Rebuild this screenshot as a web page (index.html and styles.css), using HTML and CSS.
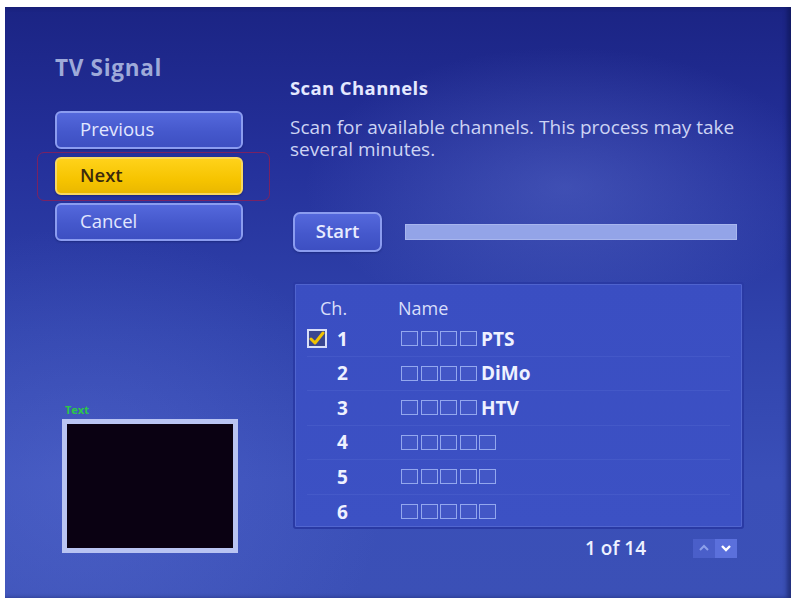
FILE: index.html
```html
<!DOCTYPE html>
<html>
<head>
<meta charset="utf-8">
<link rel="stylesheet" href="styles.css">
</head>
<body>
<div class="screen">
  <div class="left">
    <div class="page-title">TV Signal</div>
    <div class="btns">
      <div class="btn">Previous</div>
      <div class="btn btn-focus">Next<span class="focus-ring"></span></div>
      <div class="btn">Cancel</div>
    </div>
    <div class="preview">
      <div class="preview-label">Text</div>
      <div class="preview-box"></div>
    </div>
  </div>
  <div class="right">
    <div class="section-title">Scan Channels</div>
    <div class="desc">Scan for available channels. This process may take several minutes.</div>
    <div class="start-row">
      <div class="btn start-btn">Start</div>
      <div class="progress"></div>
    </div>
    <div class="panel">
      <div class="head">
        <span class="h-ch">Ch.</span>
        <span class="h-name">Name</span>
      </div>
      <div class="row">
        <span class="chk"><svg width="16" height="15" viewBox="0 0 16 15"><path d="M2 8 L6 12 L14 2" fill="none" stroke="#f2c200" stroke-width="3" stroke-linecap="round" stroke-linejoin="round"/></svg></span>
        <span class="num">1</span>
        <span class="name"><i class="sq"></i><i class="sq"></i><i class="sq"></i><i class="sq"></i><b class="ntext">PTS</b></span>
      </div>
      <div class="row">
        <span class="chk-empty"></span>
        <span class="num">2</span>
        <span class="name"><i class="sq"></i><i class="sq"></i><i class="sq"></i><i class="sq"></i><b class="ntext">DiMo</b></span>
      </div>
      <div class="row">
        <span class="chk-empty"></span>
        <span class="num">3</span>
        <span class="name"><i class="sq"></i><i class="sq"></i><i class="sq"></i><i class="sq"></i><b class="ntext">HTV</b></span>
      </div>
      <div class="row">
        <span class="chk-empty"></span>
        <span class="num">4</span>
        <span class="name"><i class="sq"></i><i class="sq"></i><i class="sq"></i><i class="sq"></i><i class="sq"></i></span>
      </div>
      <div class="row">
        <span class="chk-empty"></span>
        <span class="num">5</span>
        <span class="name"><i class="sq"></i><i class="sq"></i><i class="sq"></i><i class="sq"></i><i class="sq"></i></span>
      </div>
      <div class="row last">
        <span class="chk-empty"></span>
        <span class="num">6</span>
        <span class="name"><i class="sq"></i><i class="sq"></i><i class="sq"></i><i class="sq"></i><i class="sq"></i></span>
      </div>
    </div>
    <div class="footer">
      <span class="pager">1 of 14</span>
      <span class="arrows">
        <span class="arr up"><svg width="12" height="8" viewBox="0 0 12 8"><path d="M2 6 L6 2 L10 6" fill="none" stroke="#8da0ea" stroke-width="2"/></svg></span>
        <span class="arr down"><svg width="12" height="8" viewBox="0 0 12 8"><path d="M2 2 L6 6 L10 2" fill="none" stroke="#ffffff" stroke-width="2.4"/></svg></span>
      </span>
    </div>
  </div>
</div>
</body>
</html>
```
FILE: styles.css
```css
html, body {
  margin: 0;
  padding: 0;
  background: #ffffff;
}
body {
  font-family: "Open Sans", "DejaVu Sans", sans-serif;
}
.screen {
  margin: 7px 2px 0 5px;
  width: 786px;
  height: 591px;
  display: flex;
  overflow: hidden;
  background:
    radial-gradient(ellipse 260px 140px at 560px 180px, rgba(110,130,220,0.35), rgba(110,130,220,0) 100%),
    radial-gradient(ellipse 300px 260px at 80px 480px, rgba(100,120,220,0.35), rgba(100,120,220,0) 100%),
    linear-gradient(180deg, #1b2484 0%, #24309a 25%, #3043ac 55%, #3a4fb8 80%, #3b50b6 100%);
  box-shadow: inset -4px 0 4px rgba(10,15,70,0.5);
}
.left {
  width: 285px;
  flex: none;
  display: flex;
  flex-direction: column;
  padding-left: 50px;
  box-sizing: border-box;
}
.page-title {
  margin-top: 47px;
  height: 28px;
  line-height: 28px;
  font-size: 22.5px;
  font-weight: bold;
  letter-spacing: 0.7px;
  color: #9eaad9;
}
.btns {
  margin-top: 29px;
  display: flex;
  flex-direction: column;
  gap: 8px;
  width: 188px;
}
.btn {
  position: relative;
  height: 38px;
  box-sizing: border-box;
  border: 2px solid #8b9cf0;
  border-radius: 6px;
  background: linear-gradient(180deg, #5468dc 0%, #4558cc 55%, #3d4fc2 100%);
  color: #e2e7ff;
  font-size: 18.5px;
  line-height: 31px;
  padding-left: 23px;
  box-shadow: 0 1px 2px rgba(10,20,80,0.4);
}
.btn-focus {
  background: linear-gradient(180deg, #ffd21a 0%, #f6c400 60%, #eab800 100%);
  border-color: #f8d860;
  color: #3b2a0c;
  font-weight: 600;
}
.focus-ring {
  position: absolute;
  left: -20px;
  top: -7px;
  width: 231px;
  height: 47px;
  border: 1.5px solid rgba(150,30,80,0.75);
  border-radius: 7px;
}
.preview {
  margin-top: auto;
  margin-bottom: 45px;
  margin-left: 7px;
}
.preview-label {
  font-size: 11px;
  line-height: 12px;
  font-weight: bold;
  color: #2cc848;
  padding-left: 3px;
  margin-bottom: 3px;
}
.preview-box {
  width: 176px;
  height: 134px;
  box-sizing: border-box;
  border: 5px solid #b9c4f2;
  background: #0a0112;
}
.right {
  flex: 1;
  display: flex;
  flex-direction: column;
}
.section-title {
  margin-top: 70px;
  font-size: 18.5px;
  line-height: 22px;
  font-weight: bold;
  color: #e4e8ff;
  letter-spacing: 0.4px;
}
.desc {
  margin-top: 17px;
  width: 470px;
  font-size: 19px;
  line-height: 22px;
  color: #cdd4f4;
}
.start-row {
  margin-top: 52px;
  display: flex;
  align-items: center;
  margin-left: 3px;
}
.start-btn {
  width: 89px;
  height: 40px;
  padding: 0;
  text-align: center;
  line-height: 34px;
  font-weight: 600;
  border-radius: 7px;
  color: #e8ecff;
}
.progress {
  margin-left: 23px;
  width: 332px;
  height: 16px;
  background: #93a4e8;
  border: 1px solid #a8b6ee;
  box-sizing: border-box;
}
.panel {
  margin-top: 30px;
  margin-left: 3px;
  width: 451px;
  height: 247px;
  box-sizing: border-box;
  padding: 10px 12px 0 12px;
  background: linear-gradient(180deg, #3a4ec2 0%, #3c51c4 100%);
  border: 2px solid #2a3aa4;
  border-radius: 3px;
  box-shadow: inset 0 0 0 1px rgba(120,140,230,0.35);
}
.head {
  height: 28px;
  line-height: 28px;
  font-size: 18px;
  color: #d8defa;
  display: flex;
}
.h-ch {
  margin-left: 13px;
  width: 78px;
}
.row {
  height: 34.5px;
  display: flex;
  align-items: center;
  border-bottom: 1px solid rgba(110,135,230,0.18);
  box-sizing: border-box;
  font-size: 19px;
  font-weight: bold;
  color: #eef1ff;
}
.row.last {
  border-bottom: none;
}
.chk, .chk-empty {
  width: 20px;
  height: 19px;
  box-sizing: border-box;
  flex: none;
}
.chk {
  border: 2px solid #d8def8;
  background: #3a4690;
  display: flex;
  align-items: center;
  justify-content: center;
}
.num {
  margin-left: 10px;
  width: 64px;
  flex: none;
}
.name {
  display: flex;
  align-items: center;
  gap: 2.5px;
}
.sq {
  display: inline-block;
  width: 17px;
  height: 15px;
  box-sizing: border-box;
  border: 1.5px solid #93a7ee;
  background: rgba(70,90,200,0.7);
}
.ntext {
  margin-left: 2px;
  font-weight: bold;
}
.footer {
  margin-left: 3px;
  width: 451px;
  height: 38px;
  display: flex;
  align-items: center;
  justify-content: flex-end;
  padding-right: 7px;
  box-sizing: border-box;
}
.pager {
  font-size: 19px;
  font-weight: 600;
  color: #eef1ff;
  margin-right: 47px;
}
.arrows {
  display: flex;
  height: 19px;
}
.arr {
  width: 22px;
  height: 19px;
  display: flex;
  align-items: center;
  justify-content: center;
}
.arr.up {
  background: rgba(90,110,220,0.5);
}
.arr.down {
  background: #5b70dc;
}
```
